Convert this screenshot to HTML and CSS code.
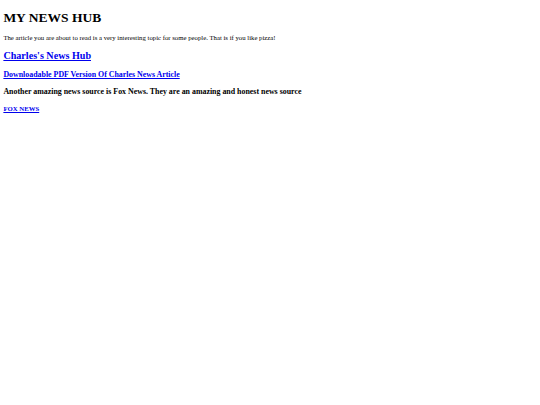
FILE: index.html
```html
<!DOCTYPE html>
<html>
<head>
<meta charset="utf-8">
<title>My News Hub</title>
<link rel="stylesheet" href="styles.css">
</head>
<body class="page">
<h1 class="title">MY NEWS HUB</h1>
<p class="intro">The article you are about to read is a very interesting topic for some people. That is if you like pizza!</p>
<h2 class="hub"><a class="link" href="#">Charles's News Hub</a></h2>
<h3 class="sub"><a class="link" href="#">Downloadable PDF Version Of Charles News Article</a></h3>
<h3 class="sub">Another amazing news source is Fox News. They are an amazing and honest news source</h3>
<h4 class="small"><a class="link" href="#">FOX NEWS</a></h4>
</body>
</html>
```
FILE: styles.css
```css
html {
  background: #fff;
}
.page {
  margin: 3.375px;
  font-family: "Liberation Serif", "Times New Roman", serif;
  color: #000;
  font-size: 6.75px;
  line-height: 1.15;
}
.title {
  font-size: 13.5px;
  margin: 6.3px 0 9.05px;
  font-weight: bold;
}
.intro {
  font-size: 6.75px;
  margin: 6.75px 0;
}
.hub {
  font-size: 10.125px;
  margin: 8.4px 0;
  font-weight: bold;
}
.sub {
  font-size: 7.9px;
  margin: 7.9px 0;
  font-weight: bold;
}
.small {
  font-size: 6.75px;
  margin: 8.98px 0;
  font-weight: bold;
}
.link {
  color: #0000ee;
  text-decoration: underline;
}
```
